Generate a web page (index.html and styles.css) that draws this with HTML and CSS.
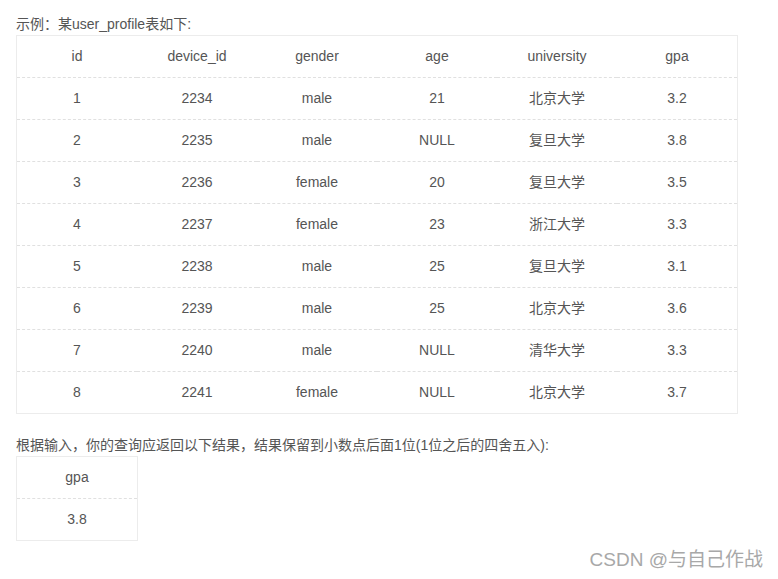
FILE: index.html
```html
<!DOCTYPE html>
<html lang="zh">
<head>
<meta charset="utf-8">
<link rel="stylesheet" href="styles.css">
</head>
<body>
<div class="page">
  <p class="intro">示例：某user_profile表如下:</p>
  <table class="data wide">
    <thead>
      <tr><th>id</th><th>device_id</th><th>gender</th><th>age</th><th>university</th><th>gpa</th></tr>
    </thead>
    <tbody>
      <tr><td>1</td><td>2234</td><td>male</td><td>21</td><td>北京大学</td><td>3.2</td></tr>
      <tr><td>2</td><td>2235</td><td>male</td><td>NULL</td><td>复旦大学</td><td>3.8</td></tr>
      <tr><td>3</td><td>2236</td><td>female</td><td>20</td><td>复旦大学</td><td>3.5</td></tr>
      <tr><td>4</td><td>2237</td><td>female</td><td>23</td><td>浙江大学</td><td>3.3</td></tr>
      <tr><td>5</td><td>2238</td><td>male</td><td>25</td><td>复旦大学</td><td>3.1</td></tr>
      <tr><td>6</td><td>2239</td><td>male</td><td>25</td><td>北京大学</td><td>3.6</td></tr>
      <tr><td>7</td><td>2240</td><td>male</td><td>NULL</td><td>清华大学</td><td>3.3</td></tr>
      <tr><td>8</td><td>2241</td><td>female</td><td>NULL</td><td>北京大学</td><td>3.7</td></tr>
    </tbody>
  </table>
  <p class="intro second">根据输入，你的查询应返回以下结果，结果保留到小数点后面1位(1位之后的四舍五入):</p>
  <table class="data">
    <thead><tr><th>gpa</th></tr></thead>
    <tbody><tr><td>3.8</td></tr></tbody>
  </table>
</div>
<div class="watermark">CSDN @与自己作战</div>
</body>
</html>
```
FILE: styles.css
```css
html, body {
  margin: 0;
  background: #fff;
}
body {
  font-family: "Liberation Sans", Arial, "Noto Sans CJK SC", sans-serif;
  color: #555;
  font-size: 14px;
  width: 778px;
  height: 579px;
  position: relative;
  overflow: hidden;
}
.page {
  padding: 13px 0 0 16px;
}
.intro {
  margin: 0;
  line-height: 22px;
  font-size: 14px;
  color: #555;
}
.intro.second {
  margin-top: 20px;
}
.data {
  border-collapse: separate;
  border-spacing: 0;
  border: 1px solid #ececec;
}
.data th, .data td {
  width: 120px;
  height: 40px;
  padding: 0 0 1px;
  text-align: center;
  vertical-align: middle;
  line-height: 20px;
  font-weight: normal;
  font-size: 14px;
  color: #555;
}
.data tbody td {
  border-top: 1px dashed #e0e0e0;
}
.watermark {
  position: absolute;
  right: 15px;
  bottom: 7px;
  font-size: 19px;
  line-height: 24px;
  color: #a8a8a8;
  font-family: "Liberation Sans", Arial, "Noto Sans CJK SC", sans-serif;
  text-shadow: 0 0 1px #fff;
}
```
